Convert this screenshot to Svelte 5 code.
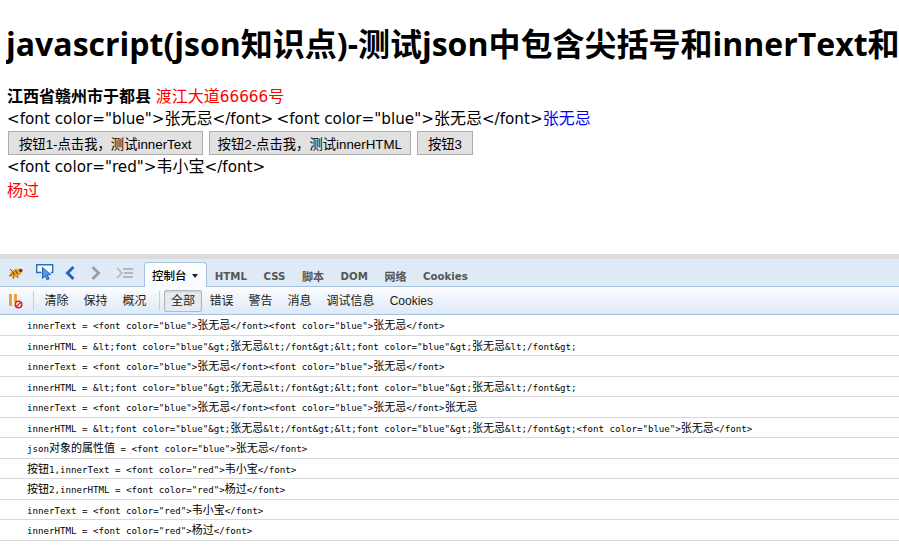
<script>
  const mainTabs = [
    { label: 'HTML', zh: false },
    { label: 'CSS', zh: false },
    { label: '脚本', zh: true },
    { label: 'DOM', zh: false },
    { label: '网络', zh: true },
    { label: 'Cookies', zh: false }
  ];
  const actions = ['清除', '保持', '概况'];
  const filters = ['错误', '警告', '消息', '调试信息', 'Cookies'];

  const blue = '<font color="blue">张无忌</font>';
  const esc = '&lt;font color="blue"&gt;张无忌&lt;/font&gt;';
  const logs = [
    `innerText = ${blue}${blue}`,
    `innerHTML = ${esc}${esc}`,
    `innerText = ${blue}${blue}`,
    `innerHTML = ${esc}${esc}`,
    `innerText = ${blue}${blue}张无忌`,
    `innerHTML = ${esc}${esc}${blue}`,
    `json对象的属性值 = ${blue}`,
    '按钮1,innerText = <font color="red">韦小宝</font>',
    '按钮2,innerHTML = <font color="red">杨过</font>',
    'innerText = <font color="red">韦小宝</font>',
    'innerHTML = <font color="red">杨过</font>'
  ];

  // latin and CJK are sized apart so the widths come out like the original fonts
  function runs(text) {
    return text.match(/[\u4e00-\u9fff]+|[^\u4e00-\u9fff]+/g).map((t) => ({
      t,
      cjk: /[\u4e00-\u9fff]/.test(t)
    }));
  }
</script>

{#snippet mixed(text)}{#each runs(text) as r}<span class:cjk={r.cjk}>{r.t}</span>{/each}{/snippet}

<div class="page">
  <h1>javascript(json知识点)-测试json中包含尖括号和innerText和innerHTML</h1>
  <div class="line"><b class="cjk">江西省赣州市于都县</b> <span class="red">{@render mixed('渡江大道66666号')}</span></div>
  <div class="line">{@render mixed(blue)}<span class="space">&nbsp;</span>{@render mixed(blue)}<span class="blue cjk">张无忌</span></div>
  <div class="buttons">
    <button>按钮1-点击我，测试innerText</button>
    <button class="tight">按钮2-点击我，测试innerHTML</button>
    <button>按钮3</button>
  </div>
  <div class="line">{@render mixed('<font color="red">韦小宝</font>')}</div>
  <div class="line red cjk">杨过</div>
</div>

<div class="firebug">
  <div class="tabbar">
    <div class="tools">
      <svg class="bug" width="16" height="14" viewBox="0 0 16 14">
        <ellipse cx="8" cy="7" rx="6.5" ry="3.8" fill="#eca22a" transform="rotate(-22 8 7)" />
        <circle cx="12.8" cy="4.4" r="1.7" fill="#5a3a10" />
        <path d="M4.5 5.5l2 3.5M7.5 4.5l2 3.5" stroke="#7a4308" stroke-width="1.2" />
        <path d="M2 3l2 2M1 10l3-1.5M5 13l1-2.5M10 12l-1-2" stroke="#6b4a20" stroke-width="1" />
      </svg>
      <svg class="inspect" width="18" height="18" viewBox="0 0 18 18">
        <path d="M5.5 8.5H.7V.7h16v7.8h-2" fill="#f4f8fe" stroke="#2a6fb8" stroke-width="1.4" />
        <path d="M6.5 3.5l8 7-3.4.5 2 3.8-2 1-1.9-3.8-2.7 2.4z" fill="#5a9ae0" stroke="#1f5fae" />
      </svg>
      <svg class="back" width="12" height="16" viewBox="0 0 12 16"><path d="M9.5 2L3.5 8l6 6" fill="none" stroke="#2a62c0" stroke-width="3" /></svg>
      <svg class="fwd" width="12" height="16" viewBox="0 0 12 16"><path d="M2.5 2l6 6-6 6" fill="none" stroke="#a0a0a0" stroke-width="3" /></svg>
      <svg class="cmd" width="18" height="12" viewBox="0 0 18 12">
        <path d="M1 1l5 5-5 5" fill="none" stroke="#b4b4b4" stroke-width="1.5" />
        <path d="M7 2h10M8 6h9M7 10h10" stroke="#a8a8a8" stroke-width="1.6" />
      </svg>
    </div>
    <div class="tab active">控制台<span class="caret"></span></div>
    {#each mainTabs as tab}
      <div class="tab" class:zh={tab.zh}>{tab.label}</div>
    {/each}
  </div>

  <div class="toolbar">
    <svg class="pause" width="14" height="16" viewBox="0 0 14 16">
      <rect x="0" y="1" width="3" height="12" fill="#f0a030" />
      <rect x="5" y="1" width="3" height="8" fill="#f0a030" />
      <circle cx="9.5" cy="11.5" r="3.2" fill="#fff" stroke="#e02020" stroke-width="1.6" />
      <path d="M7.5 13.5l4-4" stroke="#e02020" stroke-width="1.5" />
    </svg>
    <span class="sep"></span>
    {#each actions as item}
      <span class="item">{item}</span>
    {/each}
    <span class="sep second"></span>
    <span class="item all">全部</span>
    {#each filters as item}
      <span class="item">{item}</span>
    {/each}
  </div>

  <div class="log">
    {#each logs as row}
      <div class="row">{@render mixed(row)}</div>
    {/each}
  </div>
</div>

<style>
  :global(body) {
    background: #fff;
    overflow: hidden;
    font-family: "Liberation Sans", "Noto Sans CJK SC", sans-serif;
  }

  .page {
    height: 254px;
    box-sizing: border-box;
    padding: 22px 0 0 7px;
    color: #000;
    overflow: hidden;
  }

  h1 {
    margin: 0 0 19px -1px;
    font-family: "Open Sans", "Noto Sans CJK SC", sans-serif;
    font-size: 32px;
    line-height: 44px;
    font-weight: 700;
    white-space: nowrap;
    overflow: hidden;
  }

  .line {
    font-family: "DejaVu Sans", "Noto Sans CJK SC", sans-serif;
    font-size: 15.2px;
    line-height: 24px;
    height: 22px;
    white-space: nowrap;
  }

  .line .cjk,
  .line.cjk {
    font-family: "Noto Sans CJK SC", sans-serif;
    font-size: 16px;
    line-height: 1;
  }

  .line.cjk {
    line-height: 24px;
  }

  .space {
    font-size: 10px;
  }

  .red {
    color: #f00;
  }

  .blue {
    color: #00f;
  }

  .buttons {
    display: flex;
    gap: 6px;
    margin: 2px 0 0 1px;
    height: 24px;
  }

  button {
    height: 24px;
    padding: 0 10px;
    background: #e1e1e1;
    border: 1px solid #adadad;
    border-radius: 0;
    font-family: inherit;
    font-size: 13.33px;
    color: #000;
  }

  button.tight {
    padding: 0 8px;
  }

  .firebug {
    border-top: 5px solid #dcdcdc;
    height: 287px;
  }

  .tabbar {
    display: flex;
    align-items: flex-end;
    height: 27px;
    background: #dfeaf7;
    border-bottom: 1px solid #a7c0dc;
  }

  .tools {
    display: flex;
    align-items: center;
    width: 144px;
    height: 27px;
    flex: none;
    box-sizing: border-box;
    padding-left: 8px;
  }

  .inspect {
    margin-left: 12px;
    margin-top: 1px;
  }

  .back {
    margin-left: 10px;
  }

  .fwd {
    margin-left: 14px;
  }

  .cmd {
    margin-left: 14px;
  }

  .tab {
    padding: 0 8.3px;
    height: 22px;
    line-height: 22px;
    margin-bottom: -2px;
    font-family: "DejaVu Sans", sans-serif;
    font-size: 10.2px;
    font-weight: 700;
    color: #565656;
  }

  .tab.zh {
    font-family: "Noto Sans CJK SC", sans-serif;
    font-size: 11px;
    line-height: 20px;
  }

  .tab.active {
    position: relative;
    height: 24px;
    margin-bottom: -1px;
    line-height: 24px;
    padding: 0 8px 0 7px;
    color: #000;
    background: linear-gradient(#fff, #f8fbfe);
    border: 1px solid #a7c0dc;
    border-bottom: none;
    border-radius: 4px 4px 0 0;
    font-family: "Noto Sans CJK SC", sans-serif;
    font-size: 11.5px;
    font-weight: 500;
  }

  .caret {
    display: inline-block;
    margin-left: 5px;
    vertical-align: 2px;
    border: 3.5px solid transparent;
    border-top: 4px solid #222;
    border-bottom: none;
  }

  .toolbar {
    display: flex;
    align-items: center;
    height: 27px;
    background: linear-gradient(#fcfdff, #dde9f7);
    border-bottom: 1px solid #a7c0dc;
    font-size: 12px;
    color: #222;
  }

  .pause {
    margin-left: 9px;
  }

  .sep {
    width: 1px;
    height: 19px;
    margin: 0 3px 0 10px;
    background: #c3d0df;
  }

  .sep.second {
    margin: 0 4px 0 5px;
  }

  .item {
    padding: 0 6.5px;
    line-height: 20px;
    border: 1px solid transparent;
  }

  .item.all {
    padding: 0 6px;
    background: #e6ebf1;
    border-color: #b4b8bd;
    border-radius: 2px;
    box-shadow: inset 0 1px 2px #c6cbd2;
  }

  .row {
    height: 20.5px;
    line-height: 22px;
    box-sizing: border-box;
    padding-left: 27px;
    border-bottom: 1px solid #d8d8d8;
    font-family: "DejaVu Sans Mono", monospace;
    font-size: 9.13px;
    color: #000;
    white-space: nowrap;
  }

  .row .cjk {
    font-family: "Noto Sans CJK SC", sans-serif;
    font-size: 11px;
    line-height: 1;
  }
</style>
